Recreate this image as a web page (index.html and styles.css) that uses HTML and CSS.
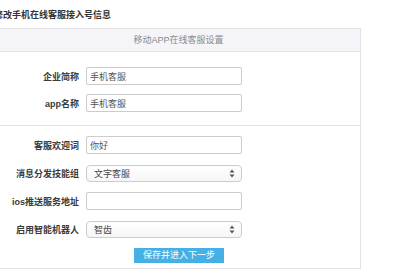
FILE: index.html
```html
<!DOCTYPE html>
<html lang="zh-CN">
<head>
    <meta charset="UTF-8">
    <title>修改手机在线客服接入号信息</title>
    <link rel="stylesheet" href="styles.css">
</head>
<body>
    <div class="page">
        <h1 class="page-title">修改手机在线客服接入号信息</h1>

        <div class="panel">
            <div class="panel-head">移动APP在线客服设置</div>

            <div class="section section-first">
                <div class="row">
                    <label class="label">企业简称</label>
                    <input class="field" type="text" value="手机客服">
                </div>
                <div class="row">
                    <label class="label">app名称</label>
                    <input class="field" type="text" value="手机客服">
                </div>
            </div>

            <div class="section">
                <div class="row">
                    <label class="label">客服欢迎词</label>
                    <input class="field" type="text" value="你好">
                </div>
                <div class="row">
                    <label class="label">消息分发技能组</label>
                    <div class="select">
                        <span>文字客服</span>
                        <svg width="6" height="9" viewBox="0 0 6 9">
                            <path d="M3 0.5L5.5 3.5H0.5Z" fill="#555"/>
                            <path d="M3 8.5L5.5 5.5H0.5Z" fill="#555"/>
                        </svg>
                    </div>
                </div>
                <div class="row">
                    <label class="label">ios推送服务地址</label>
                    <input class="field" type="text" value="">
                </div>
                <div class="row">
                    <label class="label">启用智能机器人</label>
                    <div class="select">
                        <span>智齿</span>
                        <svg width="6" height="9" viewBox="0 0 6 9">
                            <path d="M3 0.5L5.5 3.5H0.5Z" fill="#555"/>
                            <path d="M3 8.5L5.5 5.5H0.5Z" fill="#555"/>
                        </svg>
                    </div>
                </div>
                <div class="actions">
                    <button class="button">保存并进入下一步</button>
                </div>
            </div>
        </div>
    </div>
</body>
</html>
```

FILE: styles.css
```css
* {
    margin: 0;
    padding: 0;
    box-sizing: border-box;
}

body {
    background: #ffffff;
    color: #333333;
    font-family: "Liberation Sans", "Noto Sans CJK SC", sans-serif;
    font-size: 9px;
    overflow: hidden;
}

/* Layout */
.page {
    margin-left: -6px;
    width: 367px;
}

.page-title {
    font-size: 9px;
    font-weight: bold;
    line-height: 12px;
    padding-top: 9px;
    height: 28px;
    color: #333333;
}

/* Panel */
.panel {
    border: 1px solid #e2e2e2;
}

.panel-head {
    height: 23px;
    line-height: 22px;
    background: #f4f4f9;
    border-bottom: 1px solid #e4e4e8;
    text-align: center;
    color: #8a8a8a;
    padding-left: 2px;
}

.section {
    padding: 10px 0 5px;
    display: flex;
    flex-direction: column;
    gap: 10px;
}

.section-first {
    padding: 15px 0 13px;
    gap: 9px;
    border-bottom: 1px solid #e2e2e2;
}

/* Rows */
.row {
    display: flex;
    align-items: center;
    height: 18px;
}

.label {
    width: 91px;
    flex-shrink: 0;
    text-align: right;
    font-weight: bold;
    color: #3a3a3a;
    padding-right: 7px;
}

.field {
    width: 156px;
    height: 18px;
    border: 1px solid #cccccc;
    border-radius: 2px;
    padding: 0 3px;
    font-family: "Liberation Sans", "Noto Sans CJK SC", sans-serif;
    font-size: 9px;
    color: #555555;
    background: #ffffff;
    outline: none;
}

.select {
    width: 156px;
    height: 17px;
    border: 1px solid #cccccc;
    border-radius: 4px;
    padding: 0 6px 0 7px;
    background: linear-gradient(#ffffff, #f6f6f6);
    color: #444444;
    display: flex;
    align-items: center;
    justify-content: space-between;
}

/* Controls */
.actions {
    padding-left: 139px;
}

.button {
    width: 90px;
    height: 15px;
    border: none;
    background: #46afe5;
    color: #ffffff;
    font-family: "Liberation Sans", "Noto Sans CJK SC", sans-serif;
    font-size: 9px;
    line-height: 15px;
}
```
